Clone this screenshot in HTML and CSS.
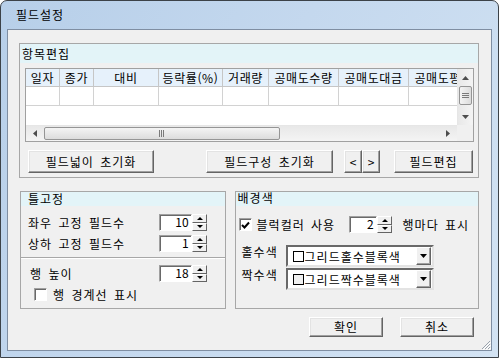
FILE: index.html
```html
<!DOCTYPE html>
<html lang="ko">
<head>
    <meta charset="UTF-8">
    <title>필드설정</title>
    <link rel="stylesheet" href="styles.css">
</head>
<body>
    <div class="window">
        <div class="titlebar">필드설정</div>

        <div class="client">
            <!-- 항목편집 -->
            <div class="group group-fields">
                <div class="group-title">항목편집</div>

                <div class="grid">
                    <div class="cells">
                        <div class="row row-head">
                            <div class="cell c1">일자</div>
                            <div class="cell c2">종가</div>
                            <div class="cell c3">대비</div>
                            <div class="cell c4">등락률(%)</div>
                            <div class="cell c5">거래량</div>
                            <div class="cell c6">공매도수량</div>
                            <div class="cell c7">공매도대금</div>
                            <div class="cell c8">공매도평균</div>
                        </div>
                        <div class="row row-data">
                            <div class="cell c1"></div>
                            <div class="cell c2"></div>
                            <div class="cell c3"></div>
                            <div class="cell c4"></div>
                            <div class="cell c5"></div>
                            <div class="cell c6"></div>
                            <div class="cell c7"></div>
                            <div class="cell c8"></div>
                        </div>
                    </div>

                    <div class="vscroll">
                        <div class="arrow">
                            <svg width="7" height="4" viewBox="0 0 7 4"><path d="M0 4 L3.5 0 L7 4 Z" fill="#4d4d4d"/></svg>
                        </div>
                        <div class="vthumb">
                            <svg width="7" height="6" viewBox="0 0 7 6"><path d="M0 0.5 H7 M0 2.5 H7 M0 4.5 H7" stroke="#7a7a7a" stroke-width="1"/></svg>
                        </div>
                        <div class="vtrack"></div>
                        <div class="arrow">
                            <svg width="7" height="4" viewBox="0 0 7 4"><path d="M0 0 L3.5 4 L7 0 Z" fill="#4d4d4d"/></svg>
                        </div>
                    </div>

                    <div class="hscroll">
                        <div class="arrow">
                            <svg width="4" height="7" viewBox="0 0 4 7"><path d="M4 0 L0 3.5 L4 7 Z" fill="#4d4d4d"/></svg>
                        </div>
                        <div class="hthumb">
                            <svg width="6" height="7" viewBox="0 0 6 7"><path d="M0.5 0 V7 M2.5 0 V7 M4.5 0 V7" stroke="#7a7a7a" stroke-width="1"/></svg>
                        </div>
                        <div class="htrack"></div>
                        <div class="arrow">
                            <svg width="4" height="7" viewBox="0 0 4 7"><path d="M0 0 L4 3.5 L0 7 Z" fill="#4d4d4d"/></svg>
                        </div>
                    </div>

                    <div class="corner"></div>
                </div>

                <div class="field-buttons">
                    <button class="btn btn-reset-width">필드넓이 초기화</button>
                    <button class="btn btn-reset-layout">필드구성 초기화</button>
                    <button class="btn btn-move">&lt;</button>
                    <button class="btn btn-move">&gt;</button>
                    <button class="btn btn-edit">필드편집</button>
                </div>
            </div>

            <div class="lower">
                <!-- 틀고정 -->
                <div class="group group-freeze">
                    <div class="group-title">틀고정</div>

                    <div class="option-row first">
                        <span class="label">좌우 고정 필드수</span>
                        <div class="spinner">
                            <div class="spin-field">10</div>
                            <div class="spin-buttons">
                                <div class="spin-up"></div>
                                <div class="spin-down"></div>
                            </div>
                        </div>
                    </div>
                    <div class="option-row">
                        <span class="label">상하 고정 필드수</span>
                        <div class="spinner">
                            <div class="spin-field">1</div>
                            <div class="spin-buttons">
                                <div class="spin-up"></div>
                                <div class="spin-down"></div>
                            </div>
                        </div>
                    </div>

                    <div class="separator"></div>

                    <div class="option-row row-height">
                        <span class="label">행 높이</span>
                        <div class="spinner">
                            <div class="spin-field">18</div>
                            <div class="spin-buttons">
                                <div class="spin-up"></div>
                                <div class="spin-down"></div>
                            </div>
                        </div>
                    </div>
                    <label class="check-row">
                        <span class="checkbox"></span>
                        <span>행 경계선 표시</span>
                    </label>
                </div>

                <!-- 배경색 -->
                <div class="group group-bg">
                    <div class="group-title">배경색</div>

                    <div class="block-row">
                        <span class="checkbox checked">
                            <svg width="9" height="9" viewBox="0 0 9 9"><path d="M1 4 L3.5 6.5 L8 1.5" fill="none" stroke="#000" stroke-width="2"/></svg>
                        </span>
                        <span class="block-label">블럭컬러 사용</span>
                        <div class="spinner spinner-small">
                            <div class="spin-field">2</div>
                            <div class="spin-buttons">
                                <div class="spin-up"></div>
                                <div class="spin-down"></div>
                            </div>
                        </div>
                        <span class="block-suffix">행마다 표시</span>
                    </div>

                    <div class="color-row first">
                        <span class="color-label">홀수색</span>
                        <div class="combo">
                            <span class="swatch"></span>
                            <span class="combo-text">그리드홀수블록색</span>
                            <span class="combo-button">
                                <svg width="7" height="4" viewBox="0 0 7 4"><path d="M0 0 L3.5 4 L7 0 Z" fill="#000"/></svg>
                            </span>
                        </div>
                    </div>
                    <div class="color-row">
                        <span class="color-label">짝수색</span>
                        <div class="combo">
                            <span class="swatch swatch-even"></span>
                            <span class="combo-text">그리드짝수블록색</span>
                            <span class="combo-button">
                                <svg width="7" height="4" viewBox="0 0 7 4"><path d="M0 0 L3.5 4 L7 0 Z" fill="#000"/></svg>
                            </span>
                        </div>
                    </div>
                </div>
            </div>

            <div class="dialog-buttons">
                <button class="btn btn-dialog">확인</button>
                <button class="btn btn-dialog">취소</button>
            </div>

            <svg class="grip" width="11" height="11" viewBox="0 0 11 11">
                <path d="M10 2 L2 10 M10 5 L5 10 M10 8 L8 10" stroke="#9aa3ad" stroke-width="1"/>
                <path d="M11 3 L3 11 M11 6 L6 11 M11 9 L9 11" stroke="#ffffff" stroke-width="1"/>
            </svg>
        </div>
    </div>
</body>
</html>
```

FILE: styles.css
```css
* {
    margin: 0;
    padding: 0;
    box-sizing: border-box;
    font-family: "Noto Sans CJK KR", "Noto Sans", sans-serif;
    font-size: 12px;
    letter-spacing: 1px;
    word-spacing: 2px;
}

body {
    background: #ffffff;
    color: #000;
}

/* 창 틀 */
.window {
    width: 499px;
    height: 358px;
    border: 1px solid #3c4248;
    border-radius: 7px 7px 0 0;
    background: linear-gradient(120deg, #b7cfe9 0%, #c4d8ee 45%, #d3e3f3 100%);
    padding: 0 6px 6px 6px;
    display: flex;
    flex-direction: column;
}

.titlebar {
    height: 28px;
    line-height: 28px;
    padding-left: 9px;
    color: #000;
}

.client {
    position: relative;
    height: 322px;
    border: 1px solid #7f8ea2;
    background: #f0f0f0;
    padding: 13px 12px 0 11px;
}

/* 그룹 박스 */
.group {
    border: 1px solid #a7a7a7;
}

.group-title {
    background: #e3f4f8;
    line-height: 14px;
    height: 14px;
}

.group-fields {
    width: 460px;
    height: 135px;
    padding-bottom: 4px;
}

.group-fields .group-title {
    height: 19px;
    line-height: 19px;
    padding-left: 2px;
}

/* 그리드 */
.grid {
    width: 449px;
    height: 74px;
    margin: 5px 0 0 5px;
    border: 1px solid #a0a0a0;
    background: #fff;
    display: grid;
    grid-template-columns: 431px 16px;
    grid-template-rows: 56px 16px;
}

.cells {
    overflow: hidden;
    background: #fff;
}

.row {
    display: flex;
    width: 600px;
}

.row-head {
    height: 18px;
    background: #e6f1fb;
    border-bottom: 1px solid #c6c6c6;
}

.row-data {
    height: 19px;
    border-bottom: 1px solid #d2d2d2;
}

.cell {
    flex: none;
    border-right: 1px solid #c6c6c6;
    text-align: center;
    line-height: 17px;
    white-space: nowrap;
    overflow: hidden;
    word-spacing: 0;
    letter-spacing: 0.6px;
}

.row-data .cell {
    border-right-color: #d2d2d2;
}

.c1, .c2 { width: 34px; }
.c3 { width: 65px; }
.c4 { width: 64px; }
.c5 { width: 46px; }
.c6, .c7, .c8 { width: 70px; }

.vscroll {
    display: flex;
    flex-direction: column;
    background: linear-gradient(to right, #e8e8e8, #f4f4f4);
    border-left: 1px solid #e6e6e6;
}

.hscroll {
    display: flex;
    background: linear-gradient(to bottom, #e8e8e8, #f4f4f4);
    border-top: 1px solid #e6e6e6;
}

.corner {
    background: #f0f0f0;
}

.arrow {
    flex: none;
    width: 16px;
    height: 16px;
    display: flex;
    align-items: center;
    justify-content: center;
}

.vscroll .arrow {
    width: 15px;
    height: 17px;
}

.hscroll .arrow {
    width: 18px;
    height: 15px;
}

.vthumb {
    flex: none;
    height: 19px;
    margin: 0 1px;
    border: 1px solid #959595;
    border-radius: 2px;
    background: linear-gradient(to right, #f4f4f4, #dcdcdc);
    display: flex;
    align-items: center;
    justify-content: center;
}

.hthumb {
    flex: none;
    width: 236px;
    margin: 1px 0;
    border: 1px solid #959595;
    border-radius: 2px;
    background: linear-gradient(to bottom, #f4f4f4, #dcdcdc);
    display: flex;
    align-items: center;
    justify-content: center;
}

.vtrack, .htrack {
    flex: 1;
}

/* 버튼 */
.btn {
    height: 23px;
    background: #f0f0f0;
    border: 1px solid;
    border-color: #ffffff #646464 #646464 #ffffff;
    box-shadow: inset -1px -1px #a0a0a0, inset 1px 1px #e3e3e3;
    color: #000;
    text-align: center;
    line-height: 19px;
}

.field-buttons {
    display: flex;
    margin-top: 8px;
    padding-left: 8px;
}

.btn-reset-width { width: 126px; }
.btn-reset-layout { width: 127px; margin-left: 52px; }
.btn-move { width: 18px; letter-spacing: 0; }
.btn-reset-layout + .btn-move { margin-left: 11px; }
.btn-edit { width: 79px; margin-left: 14px; }

/* 아래 영역 */
.lower {
    display: flex;
    gap: 9px;
    margin-top: 13px;
    padding-left: 1px;
}

.group-freeze {
    width: 206px;
    height: 118px;
}

.group-freeze .group-title {
    padding-left: 7px;
}

.group-bg {
    width: 245px;
    height: 118px;
}

.group-bg .group-title {
    padding-left: 2px;
    line-height: 12px;
}

.option-row {
    display: flex;
    align-items: center;
    height: 17px;
    margin-top: 4px;
    padding: 0 18px 0 7px;
}

.option-row.first {
    margin-top: 8px;
}

.option-row .label {
    flex: 1;
}

.row-height {
    margin-top: 6px;
    padding-left: 9px;
}

.separator {
    margin-top: 5px;
    height: 2px;
    border-top: 1px solid #a7a7a7;
    border-bottom: 1px solid #ffffff;
}

/* 스핀 */
.spinner {
    display: flex;
    height: 17px;
}

.spin-field {
    width: 33px;
    height: 17px;
    background: #fff;
    border: 1px solid;
    border-color: #a0a0a0 #ffffff #ffffff #a0a0a0;
    box-shadow: inset 1px 1px #696969;
    text-align: right;
    padding-right: 2px;
    line-height: 14px;
    letter-spacing: 0;
    word-spacing: 0;
}

.spinner-small .spin-field {
    width: 28px;
}

.spin-buttons {
    width: 15px;
    display: flex;
    flex-direction: column;
}

.spin-up, .spin-down {
    position: relative;
    height: 8.5px;
    background: #f0f0f0;
    border: 1px solid;
    border-color: #ffffff #646464 #646464 #ffffff;
}

.spin-up::after, .spin-down::after {
    content: "";
    position: absolute;
    left: 4px;
    top: 2px;
    border-left: 3px solid transparent;
    border-right: 3px solid transparent;
}

.spin-up::after {
    border-bottom: 3px solid #000;
}

.spin-down::after {
    top: 1px;
    border-top: 3px solid #000;
}

/* 체크박스 */
.checkbox {
    flex: none;
    width: 13px;
    height: 13px;
    background: #fff;
    border: 1px solid;
    border-color: #a0a0a0 #ffffff #ffffff #a0a0a0;
    box-shadow: inset 1px 1px #696969;
    display: flex;
    align-items: center;
    justify-content: center;
}

.checkbox svg {
    margin: 1px 0 0 1px;
}

.check-row {
    display: flex;
    align-items: center;
    gap: 6px;
    margin-top: 4px;
    padding-left: 13px;
}

.block-row {
    display: flex;
    align-items: center;
    height: 17px;
    margin-top: 10px;
    padding-left: 3px;
}

.block-label {
    margin-left: 5px;
    width: 92px;
}

.block-suffix {
    margin-left: 11px;
}

/* 콤보 */
.color-row {
    display: flex;
    align-items: flex-start;
    margin-top: 1px;
    padding-left: 6px;
}

.color-row.first {
    margin-top: 12px;
}

.color-label {
    width: 44px;
    line-height: 13px;
}

.combo {
    width: 148px;
    height: 22px;
    background: #fff;
    border: 2px solid;
    border-color: #696969 #e3e3e3 #e3e3e3 #696969;
    display: flex;
    align-items: center;
    padding: 0 1px 0 5px;
}

.swatch {
    width: 11px;
    height: 11px;
    border: 1px solid #000;
    background: #fff;
}

.swatch-even {
    background: #f0f0f0;
}

.combo-text {
    flex: 1;
    margin-left: 1px;
}

.combo-button {
    width: 15px;
    height: 18px;
    background: #f0f0f0;
    border: 1px solid;
    border-color: #ffffff #646464 #646464 #ffffff;
    box-shadow: inset -1px -1px #a0a0a0;
    display: flex;
    align-items: center;
    justify-content: center;
}

/* 확인 / 취소 */
.dialog-buttons {
    display: flex;
    justify-content: flex-end;
    gap: 17px;
    margin-top: 8px;
    padding-right: 5px;
}

.btn-dialog {
    width: 74px;
    height: 20px;
    line-height: 16px;
}

.grip {
    position: absolute;
    right: 0;
    bottom: 0;
}
```
